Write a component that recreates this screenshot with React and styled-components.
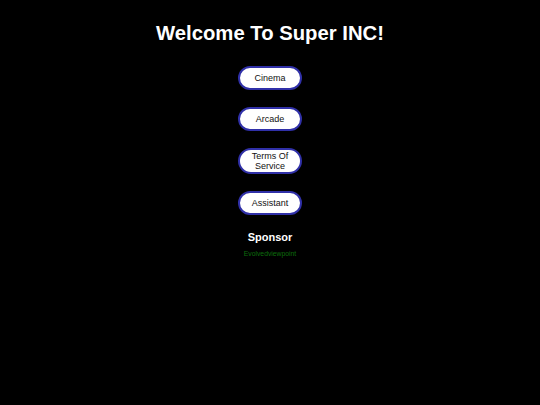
import styled, { createGlobalStyle } from 'styled-components';

const GlobalStyle = createGlobalStyle`
  html, body {
    margin: 0;
    background: #000;
    font-family: "Liberation Sans", Arial, sans-serif;
  }
`;

const links = ['Cinema', 'Arcade', 'Terms Of Service', 'Assistant'];

export default function App() {
  return (
    <>
      <GlobalStyle />
      <StyledPage>
        <StyledTitle>Welcome To Super INC!</StyledTitle>
        <StyledNav>
          {links.map((label) => (
            <StyledButton key={label}>{label}</StyledButton>
          ))}
        </StyledNav>
        <StyledSponsor>Sponsor</StyledSponsor>
        <StyledSponsorLink href='#'>Evolvedviewpoint</StyledSponsorLink>
      </StyledPage>
    </>
  );
}

const StyledPage = styled.div`
  display: flex;
  flex-direction: column;
  align-items: center;
  width: 540px;
  height: 405px;
  background: #000;
  color: #fff;
`;

const StyledTitle = styled.h1`
  margin: 20px 0 0;
  font-size: 20.3px;
  line-height: 26px;
  font-weight: 700;
`;

const StyledNav = styled.nav`
  display: flex;
  flex-direction: column;
  align-items: center;
  gap: 17px;
  margin-top: 20px;
`;

const StyledButton = styled.button`
  box-sizing: border-box;
  display: flex;
  align-items: center;
  justify-content: center;
  width: 64px;
  min-height: 24px;
  padding: 1px 6px;
  background: #fff;
  color: #111;
  border: 2px solid #3030a8;
  border-radius: 14px;
  font-family: "Liberation Sans", Arial, sans-serif;
  font-size: 9px;
  line-height: 10px;
  cursor: pointer;
`;

const StyledSponsor = styled.h2`
  margin: 16px 0 0;
  font-size: 11px;
  line-height: 13px;
  font-weight: 700;
`;

const StyledSponsorLink = styled.a`
  margin-top: 5px;
  font-size: 6.8px;
  line-height: 9px;
  color: #0d6e0d;
  text-decoration: none;
`;
